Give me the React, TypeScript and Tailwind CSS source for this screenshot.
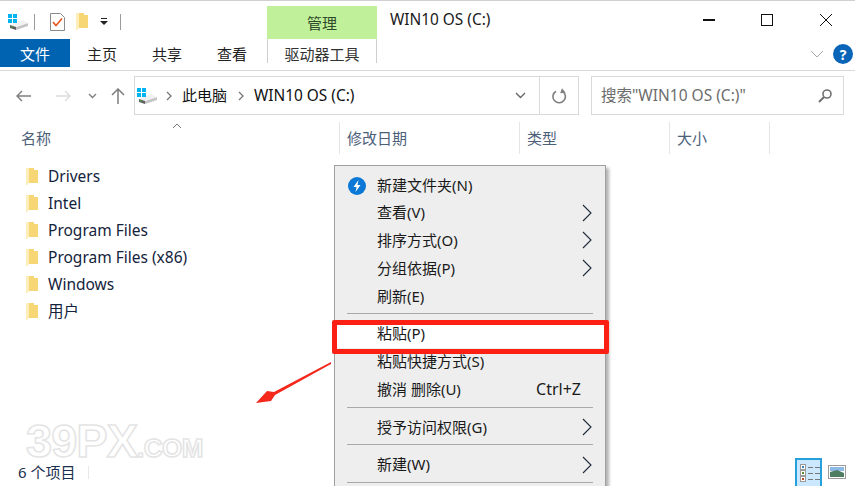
const folders = ["Drivers", "Intel", "Program Files", "Program Files (x86)", "Windows", "用户"]

const columns = [
	{ label: "修改日期", width: "w-[180px]" },
	{ label: "类型", width: "w-[150px]" },
	{ label: "大小", width: "w-[100px]" },
]

function DriveIcon() {
	return (
		<svg width="20" height="16" viewBox="0 0 20 16">
			<path d="M8 13 L20 9 L20 12 L8 16 Z" fill="#c4c4c4" />
			<path d="M2 11 L14 6 L20 9 L8 13 Z" fill="#f1f1f1" />
			<path d="M2 11 L8 13 L8 16 L2 14 Z" fill="#5f5f5f" />
			<rect x="3" y="12.5" width="1.5" height="1" fill="#46c23c" />
			<rect x="0" y="0" width="4" height="4" fill="#00b4f0" />
			<rect x="5" y="0" width="4" height="4" fill="#00b4f0" />
			<rect x="0" y="5" width="4" height="4" fill="#00b4f0" />
			<rect x="5" y="5" width="4" height="4" fill="#00b4f0" />
		</svg>
	)
}

function FolderIcon() {
	return (
		<svg width="12" height="17" viewBox="0 0 12 17">
			<path d="M0 0 L8 0 L8 2 L12 2 L12 15 L2 15 L2 16 L0 17 Z" fill="#f9dc85" />
			<path d="M3 0 L8 0 L8 2 L12 2 L12 15 L7 15 L3 15 Z" fill="#f7d675" />
			<path d="M0 0 L3 0 L3 15 L0 17 Z" fill="#fdedb9" />
		</svg>
	)
}

function MenuArrow() {
	return (
		<svg width="12" height="18" viewBox="0 0 12 18" fill="none">
			<path d="M2 1 L10 9 L2 17" stroke="#1f2a3a" strokeWidth="1.1" />
		</svg>
	)
}

function MenuItem({
	label,
	arrow,
	shortcut,
	icon,
	highlight,
}: {
	label: string
	arrow?: boolean
	shortcut?: string
	icon?: boolean
	highlight?: boolean
}) {
	return (
		<div className={`flex h-[27.75px] items-center pl-[42px] pr-[12px] text-[15px] text-[#1a1a1a] ${highlight ? "bg-white" : ""}`}>
			<span className="flex-1">{label}</span>
			{shortcut && <span className="mr-[12px] text-[16px]">{shortcut}</span>}
			{arrow && <MenuArrow />}
			{icon && (
				<svg className="absolute left-[13px] top-[11px]" width="18" height="18" viewBox="0 0 18 18">
					<circle cx="9" cy="9" r="9" fill="#0b78d6" />
					<path d="M10.5 3 L5.5 10 L8.5 10 L7.5 15 L12.5 8 L9.5 8 Z" fill="#fff" />
				</svg>
			)}
		</div>
	)
}

function MenuSeparator() {
	return <div className="mx-[12px] mb-[5.5px] mt-[3.5px] h-px bg-[#a9a9a9]" />
}

export default function App() {
	return (
		<div className="relative flex h-[486px] w-[855px] flex-col overflow-hidden bg-white font-['Noto_Sans','Noto_Sans_CJK_SC',sans-serif] text-[15px] text-[#1a1a1a]">
			<div className="h-px shrink-0 bg-[#d0d0d0]" />

			{/* title bar */}
			<div className="flex h-[38px] shrink-0 items-center">
				<div className="flex w-[267px] items-center pl-[8px] pt-[3px]">
					<DriveIcon />
					<div className="ml-[6px] h-[16px] w-px bg-[#9a9a9a]" />
					<svg className="ml-[15px]" width="15" height="18" viewBox="0 0 15 18" fill="none">
						<path d="M0.5 0.5 H10.5 L14.5 4.5 V17.5 H0.5 Z" fill="#fff" stroke="#8a8a8a" />
						<path d="M3 9 L6 12.5 L12 5.5" stroke="#e8561e" strokeWidth="1.6" />
					</svg>
					<div className="ml-[11px] flex">
						<FolderIcon />
					</div>
					<svg className="ml-[12px]" width="8" height="8" viewBox="0 0 8 8">
						<rect x="1" y="0" width="6" height="1" fill="#222" />
						<path d="M0 3 H8 L4 7 Z" fill="#222" />
					</svg>
					<div className="ml-[12px] h-[16px] w-px bg-[#9a9a9a]" />
				</div>
				<div className="mt-[5px] flex h-[33px] w-[110px] items-center justify-center self-start bg-[#c1f09b] pt-[1px] text-[#2f4a2a]">管理</div>
				<div className="ml-[13px] flex-1 text-[15.4px] text-[#1a1a1a]">WIN10 OS (C:)</div>
				<div className="flex h-full items-center">
					<div className="h-[1.5px] w-[12px] bg-[#111]" />
					<div className="ml-[46px] h-[12px] w-[12px] border border-[#111]" />
					<svg className="ml-[47px] mr-[23px]" width="12" height="12" viewBox="0 0 12 12" fill="none">
						<path d="M0 0 L12 12 M12 0 L0 12" stroke="#111" strokeWidth="1" />
					</svg>
				</div>
			</div>

			{/* ribbon tabs */}
			<div className="flex h-[32px] shrink-0 border-b border-[#dadada]">
				<div className="flex h-[28px] w-[70px] items-center justify-center bg-[#0063b1] pt-[2px] text-white">文件</div>
				<div className="flex h-[28px] w-[197px] items-center pl-[17px] pt-[2px] text-[#222]">
					<span>主页</span>
					<span className="ml-[35px]">共享</span>
					<span className="ml-[35px]">查看</span>
				</div>
				<div className="flex h-[24px] w-[110px] items-start justify-center border-x border-[#cfcfcf] pt-[4px] text-[#333]">驱动器工具</div>
				<div className="flex flex-1 items-center justify-end pb-[1px] pr-[2px]">
					<svg width="14" height="8" viewBox="0 0 14 8" fill="none">
						<path d="M1 1 L7 7 L13 1" stroke="#a8a8a8" />
					</svg>
					<div className="ml-[9px] flex h-[20px] w-[20px] items-center justify-center rounded-full bg-[#0a64b8] text-[14px] font-bold text-white">?</div>
				</div>
			</div>

			{/* navigation row */}
			<div className="flex h-[51px] shrink-0 items-start pt-[5px]">
				<div className="flex h-[39px] w-[134px] items-center pl-[16px]">
					<svg width="16" height="12" viewBox="0 0 16 12" fill="none">
						<path d="M15 6 H1 M6 1 L1 6 L6 11" stroke="#7d7d7d" strokeWidth="1.4" />
					</svg>
					<svg className="ml-[23px]" width="16" height="12" viewBox="0 0 16 12" fill="none">
						<path d="M1 6 H15 M10 1 L15 6 L10 11" stroke="#dcdcdc" strokeWidth="1.4" />
					</svg>
					<svg className="ml-[17px]" width="9" height="6" viewBox="0 0 9 6" fill="none">
						<path d="M1 1 L4.5 4.5 L8 1" stroke="#808080" strokeWidth="1.4" />
					</svg>
					<svg className="ml-[14px]" width="14" height="16" viewBox="0 0 14 16" fill="none">
						<path d="M7 16 V1 M1 7 L7 1 L13 7" stroke="#7d7d7d" strokeWidth="1.5" />
					</svg>
				</div>
				<div className="flex h-[39px] w-[445px] items-center border border-[#d9d9d9]">
					<div className="ml-[2px] flex">
						<DriveIcon />
					</div>
					<svg className="ml-[9px]" width="6" height="10" viewBox="0 0 6 10" fill="none">
						<path d="M1 1 L5 5 L1 9" stroke="#777" strokeWidth="1.3" />
					</svg>
					<span className="ml-[10px] text-[#111]">此电脑</span>
					<svg className="ml-[11px]" width="6" height="10" viewBox="0 0 6 10" fill="none">
						<path d="M1 1 L5 5 L1 9" stroke="#777" strokeWidth="1.3" />
					</svg>
					<span className="ml-[10px] flex-1 text-[15.4px] text-[#111]">WIN10 OS (C:)</span>
					<svg className="mr-[13px]" width="11" height="7" viewBox="0 0 11 7" fill="none">
						<path d="M1 1 L5.5 5.5 L10 1" stroke="#666" strokeWidth="1.4" />
					</svg>
					<div className="flex h-full w-[39px] items-center justify-center border-l border-[#d9d9d9]">
						<svg width="15" height="16" viewBox="0 0 15 16" fill="none">
							<path d="M9.5 2.8 A6.2 6.2 0 1 1 4 3.2" stroke="#808080" strokeWidth="1.6" />
							<path d="M9 0 L9 5.5 L14 3 Z" fill="#808080" transform="rotate(20 9 3)" />
						</svg>
					</div>
				</div>
				<div className="ml-[12px] flex h-[39px] w-[253px] items-center border border-[#d9d9d9] pl-[9px] pr-[11px] text-[15.5px] text-[#6d6d6d]">
					<span className="flex-1">搜索"WIN10 OS (C:)"</span>
					<svg width="14" height="14" viewBox="0 0 14 14" fill="none">
						<circle cx="9" cy="5" r="4" stroke="#707070" strokeWidth="1.6" />
						<path d="M6 8 L1 13" stroke="#707070" strokeWidth="2" />
					</svg>
				</div>
			</div>

			{/* column headers */}
			<div className="relative flex h-[32px] shrink-0 items-center text-[#4c607a]">
				<div className="flex h-full w-[340px] items-center border-r border-[#e5e5e5] pl-[21px]">名称</div>
				<svg className="absolute left-[172px] top-[1px]" width="10" height="6" viewBox="0 0 10 6" fill="none">
					<path d="M1 5 L5 1 L9 5" stroke="#7a7a7a" />
				</svg>
				{columns.map((c) => (
					<div key={c.label} className={`flex h-full items-center border-r border-[#e5e5e5] pl-[7px] ${c.width}`}>
						{c.label}
					</div>
				))}
			</div>

			{/* file list */}
			<div className="mt-[9px] flex flex-col">
				{folders.map((name) => (
					<div key={name} className="flex h-[27px] items-center pl-[26px] text-[15.5px] text-[#14233c]">
						<FolderIcon />
						<span className="ml-[10px]">{name}</span>
					</div>
				))}
			</div>

			{/* status bar */}
			<div className="mt-auto flex h-[28px] shrink-0 items-center text-[#1c2f4f]">
				<span className="pl-[18px]">6 个项目</span>
				<div className="ml-[13px] h-[13px] w-px bg-[#e8e8e8]" />
				<div className="ml-auto flex h-full items-center pr-[9px]">
					<div className="flex h-[28px] w-[27px] flex-col justify-center gap-[2px] border-2 border-b-0 border-[#26a0da] bg-[#cce8ff] pl-[4px]">
						{["#3b7fb5", "#5f8a2e", "#b5482a"].map((c) => (
							<div key={c} className="flex items-center gap-[2px]">
								<div className="flex h-[4px] w-[4px] items-center justify-center bg-white outline outline-1 outline-[#9a9a9a]">
									<div className="h-[2px] w-[2px]" style={{ backgroundColor: c }} />
								</div>
								<div className="ml-[1px] h-px w-[5px] bg-[#777]" />
								<div className="h-px w-[5px] bg-[#777]" />
							</div>
						))}
					</div>
					<svg className="ml-[6px]" width="18" height="14" viewBox="0 0 18 14">
						<rect x="0.5" y="0.5" width="17" height="13" fill="#fff" stroke="#9c9c9c" />
						<rect x="2" y="2" width="14" height="4" fill="#8db9e6" />
						<path d="M2 7 L9 5 L16 8 V12 H2 Z" fill="#4f7d62" />
					</svg>
				</div>
			</div>

			{/* watermark */}
			<div className="absolute left-[26px] top-[421px] flex items-baseline font-['Liberation_Sans',sans-serif] font-bold text-transparent [-webkit-text-stroke:1.5px_#e4e4e4]">
				<span className="text-[47px] leading-[40px] tracking-[-1px]">39PX</span>
				<span className="text-[26px] leading-[40px] tracking-[-0.5px]">.COM</span>
			</div>

			{/* context menu */}
			<div className="absolute left-[334px] top-[165px] h-[340px] w-[272px] border border-[#a0a0a0] bg-[#eeeeee] pt-[5px] shadow-[3px_3px_3px_rgba(0,0,0,0.3)]">
				<MenuItem label="新建文件夹(N)" icon />
				<MenuItem label="查看(V)" arrow />
				<MenuItem label="排序方式(O)" arrow />
				<MenuItem label="分组依据(P)" arrow />
				<MenuItem label="刷新(E)" />
				<MenuSeparator />
				<MenuItem label="粘贴(P)" highlight />
				<MenuItem label="粘贴快捷方式(S)" />
				<MenuItem label="撤消 删除(U)" shortcut="Ctrl+Z" />
				<MenuSeparator />
				<MenuItem label="授予访问权限(G)" arrow />
				<MenuSeparator />
				<MenuItem label="新建(W)" arrow />
				<MenuSeparator />
			</div>

			{/* annotation */}
			<div className="absolute left-[332px] top-[320px] h-[34px] w-[277px] rounded-[2px] border-[5px] border-[#fb1f14]" />
			<svg className="absolute left-[250px] top-[358px]" width="85" height="50" viewBox="0 0 85 50">
				<path d="M81 4 L24 34 L17 33 L6 45 L21 43 L25 37 L81 6 Z" fill="#f5281c" />
			</svg>
		</div>
	)
}
